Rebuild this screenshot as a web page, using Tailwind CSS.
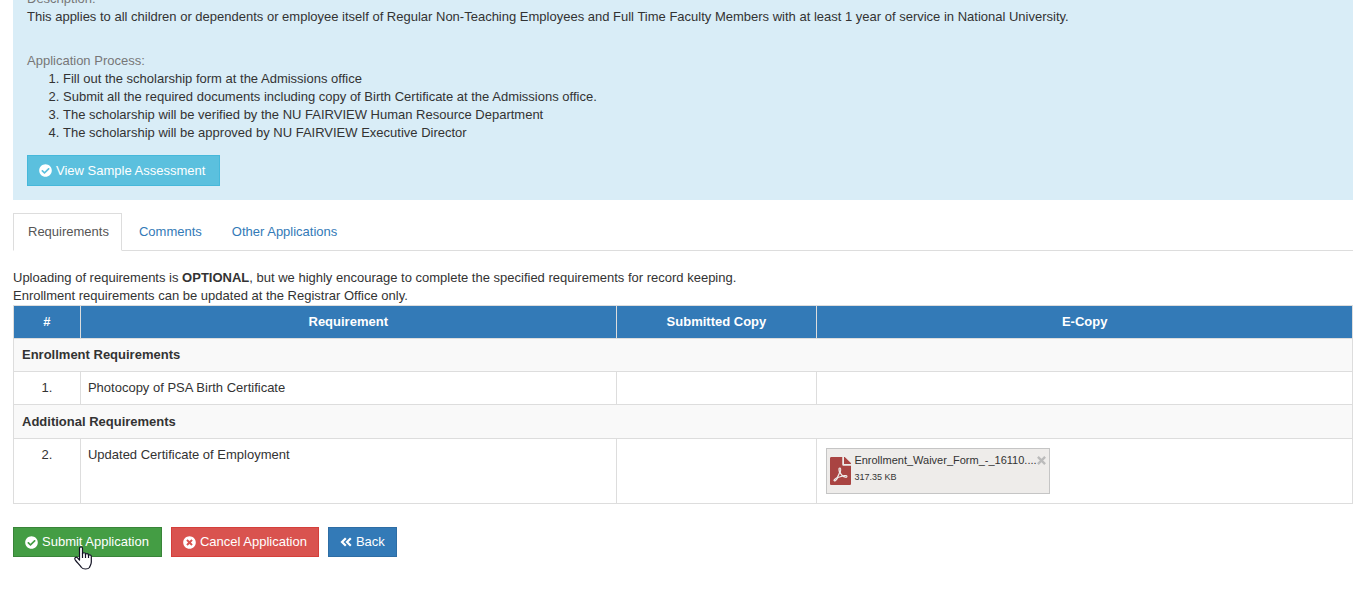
<!DOCTYPE html>
<html lang="en">
<head>
    <meta charset="utf-8">
    <title>Scholarship Application</title>
    <script src="https://cdn.jsdelivr.net/npm/@tailwindcss/browser@4"></script>
</head>
<body class="bg-white text-[#333] text-[13px] leading-[18px] font-['Liberation_Sans',Arial,sans-serif]">
    <!-- icons -->
    <svg class="hidden">
        <symbol id="icon-check" viewBox="0 0 512 512"><path fill="currentColor" d="M504 256c0 136.967-111.033 248-248 248S8 392.967 8 256 119.033 8 256 8s248 111.033 248 248zM227.314 387.314l184-184c6.248-6.248 6.248-16.379 0-22.627l-22.627-22.627c-6.248-6.249-16.379-6.249-22.628 0L216 308.118l-70.059-70.059c-6.248-6.248-16.379-6.248-22.628 0l-22.627 22.627c-6.248 6.248-6.248 16.379 0 22.627l104 104c6.249 6.249 16.379 6.249 22.628.001z"/></symbol>
        <symbol id="icon-cancel" viewBox="0 0 512 512"><path fill="currentColor" d="M256 8C119 8 8 119 8 256s111 248 248 248 248-111 248-248S393 8 256 8zm121.600 313.100c4.700 4.700 4.700 12.300 0 17L338 377.600c-4.700 4.700-12.300 4.700-17 0L256 312l-65.100 65.600c-4.700 4.700-12.300 4.700-17 0L134.400 338c-4.700-4.700-4.700-12.300 0-17l65.600-65-65.600-65.100c-4.700-4.700-4.700-12.300 0-17l39.600-39.600c4.700-4.700 12.300-4.700 17 0l65 65.700 65.100-65.600c4.700-4.700 12.300-4.700 17 0l39.600 39.600c4.700 4.700 4.700 12.300 0 17L312 256l65.600 65.100z"/></symbol>
        <symbol id="icon-back" viewBox="0 0 12 12"><path fill="none" stroke="currentColor" stroke-width="2.200" d="M5.800 2.200 2 6l3.800 3.800M10.800 2.200 7 6l3.800 3.800"/></symbol>
        <symbol id="icon-close" viewBox="0 0 10 10"><path fill="none" stroke="currentColor" stroke-width="2.600" d="m1 1 8 8M9 1 1 9"/></symbol>
    </svg>

    <main class="pl-[13px] pr-[5px] pb-9">
        <section class="bg-[#d9edf7] overflow-hidden px-3.5 pb-3.5">
            <div class="-mt-2.5">
                <p class="text-[#777]">Description:</p>
                <p>This applies to all children or dependents or employee itself of Regular Non-Teaching Employees and Full Time Faculty Members with at least 1 year of service in National University.</p>
            </div>
            <div class="mt-[26px]">
                <p class="text-[#777]">Application Process:</p>
                <ol class="list-decimal pl-9">
                    <li>Fill out the scholarship form at the Admissions office</li>
                    <li>Submit all the required documents including copy of Birth Certificate at the Admissions office.</li>
                    <li>The scholarship will be verified by the NU FAIRVIEW Human Resource Department</li>
                    <li>The scholarship will be approved by NU FAIRVIEW Executive Director</li>
                </ol>
            </div>
            <button type="button" class="mt-[13px] h-[31px] pl-[11px] pr-3.5 flex items-center gap-1 bg-[#5bc0de] border border-[#46b8da] text-white">
                <svg class="size-[13px]"><use href="#icon-check"/></svg>
                View Sample Assessment
            </button>
        </section>

        <nav class="mt-[13px] h-[38px] flex gap-0.5 border-b border-[#ddd]">
            <a href="#requirements" class="h-[38px] pl-3.5 pr-3 py-[9px] border border-[#ddd] border-b-white bg-white text-[#555]">Requirements</a>
            <a href="#comments" class="px-[15px] py-[10px] text-[#337ab7]">Comments</a>
            <a href="#other" class="px-[13px] py-[10px] text-[#337ab7]">Other Applications</a>
        </nav>

        <div id="requirements" class="mt-[18px]">
            <p>Uploading of requirements is <b>OPTIONAL</b>, but we highly encourage to complete the specified requirements for record keeping.</p>
            <p>Enrollment requirements can be updated at the Registrar Office only.</p>
            <table class="w-full table-fixed border-collapse border border-[#ddd]">
                <colgroup>
                    <col class="w-[5%]">
                    <col class="w-[40%]">
                    <col class="w-[15%]">
                    <col class="w-[40%]">
                </colgroup>
                <thead class="bg-[#337ab7] text-white">
                    <tr class="h-[33px]">
                        <th class="border border-[#ddd]">#</th>
                        <th class="border border-[#ddd]">Requirement</th>
                        <th class="border border-[#ddd]">Submitted Copy</th>
                        <th class="border border-[#ddd]">E-Copy</th>
                    </tr>
                </thead>
                <tbody>
                    <tr class="h-[33px] bg-[#f9f9f9]">
                        <th colspan="4" class="border border-[#ddd] px-2 text-left">Enrollment Requirements</th>
                    </tr>
                    <tr class="h-[33px]">
                        <td class="border border-[#ddd] text-center">1.</td>
                        <td class="border border-[#ddd] px-[7px]">Photocopy of PSA Birth Certificate</td>
                        <td class="border border-[#ddd]"></td>
                        <td class="border border-[#ddd]"></td>
                    </tr>
                    <tr class="h-[34px] bg-[#f9f9f9]">
                        <th colspan="4" class="border border-[#ddd] px-2 text-left">Additional Requirements</th>
                    </tr>
                    <tr class="h-[65px] align-top">
                        <td class="border border-[#ddd] pt-[7px] text-center">2.</td>
                        <td class="border border-[#ddd] px-[7px] pt-[7px]">Updated Certificate of Employment</td>
                        <td class="border border-[#ddd]"></td>
                        <td class="border border-[#ddd] px-[9px] pt-[9px]">
                            <div class="w-56 h-[46px] px-[3px] pt-[3px] flex items-start gap-[3px] bg-[#eeecea] border border-[#c5c5c5]">
                                <svg class="mt-[5px] w-[21px] h-7 shrink-0 text-[#a94442]" viewBox="0 0 384 512"><path fill="currentColor" d="M181.900 256.100c-5-16-4.900-46.900-2-46.900 8.400 0 7.600 36.900 2 46.900zm-1.700 47.200c-7.700 20.200-17.300 43.300-28.400 62.700 18.300-7 39-17.200 62.900-21.900-12.700-9.600-24.900-23.400-34.500-40.800zM86.100 428.100c0 .8 13.200-5.400 34.900-40.200-6.700 6.300-29.100 24.500-34.900 40.200zM248 160h136v328c0 13.300-10.700 24-24 24H24c-13.300 0-24-10.700-24-24V24C0 10.700 10.700 0 24 0h200v136c0 13.200 10.800 24 24 24zm-8 171.800c-20-12.200-33.300-29-42.700-53.800 4.500-18.500 11.600-46.600 6.200-64.200-4.700-29.400-42.400-26.500-47.800-6.800-5 18.300-.4 44.100 8.100 77-11.600 27.600-28.700 64.600-40.800 85.800-.1 0-.1.100-.2.100-27.100 13.900-73.600 44.500-54.500 68 5.600 6.900 16 10 21.500 10 17.900 0 35.700-18 61.100-61.800 25.800-8.500 54.100-19.100 79-23.200 21.700 11.800 47.100 19.500 64 19.500 29.200 0 31.200-32 19.700-43.400-13.900-13.600-54.300-9.700-73.600-7.200zM377 105L279 7c-4.500-4.500-10.600-7-17-7h-6v128h128v-6.100c0-6.300-2.500-12.400-7-16.900zm-74.100 255.300c4.100-2.700-2.500-11.900-42.800-9 37.100 15.800 42.800 9 42.800 9z"/></svg>
                                <div class="flex-1 min-w-0">
                                    <p class="text-[11px] leading-4 whitespace-nowrap">Enrollment_Waiver_Form_-_16110....</p>
                                    <p class="text-[9px] leading-[18px]">317.35 KB</p>
                                </div>
                                <button type="button" aria-label="Remove file" class="mt-1 text-[#bbb]">
                                    <svg class="size-[9px]"><use href="#icon-close"/></svg>
                                </button>
                            </div>
                        </td>
                    </tr>
                </tbody>
            </table>
        </div>

        <div class="relative mt-[23px] flex gap-[9px] text-white">
            <button type="button" class="h-[30px] pl-[11px] pr-3 flex items-center gap-1 bg-[#449d44] border border-[#398439]">
                <svg class="size-[13px]"><use href="#icon-check"/></svg>
                Submit Application
            </button>
            <button type="button" class="h-[30px] px-[11px] flex items-center gap-1 bg-[#d9534f] border border-[#d43f3a]">
                <svg class="size-[13px]"><use href="#icon-cancel"/></svg>
                Cancel Application
            </button>
            <button type="button" class="h-[30px] px-[11px] flex items-center gap-1 bg-[#337ab7] border border-[#2e6da4]">
                <svg class="size-3"><use href="#icon-back"/></svg>
                Back
            </button>
            <!-- mouse pointer -->
            <svg class="absolute left-[61px] top-[19px] w-[18px] h-6" viewBox="0 0 18 24"><path fill="#fff" stroke="#112" stroke-width="1.200" stroke-linejoin="round" d="M5.500 14V2.500C5.500.2 8.500.2 8.500 2.500V8c0-1.700 3-1.700 3 0v.8c0-1.700 3-1.500 3 .2v.8c0-1.500 2.800-1.300 2.800.5V16c0 2.500-1.300 4-1.800 5.500-1.500 2-6.500 2-8 0C6 19 3 16.500 1.200 13.800c-1.200-2 1-3.300 2.300-2L5.500 14z"/><path stroke="#112" stroke-width="1.200" d="M8.500 7.500V12M11.500 8v4M14.500 9v3"/></svg>
        </div>
    </main>
</body>
</html>
